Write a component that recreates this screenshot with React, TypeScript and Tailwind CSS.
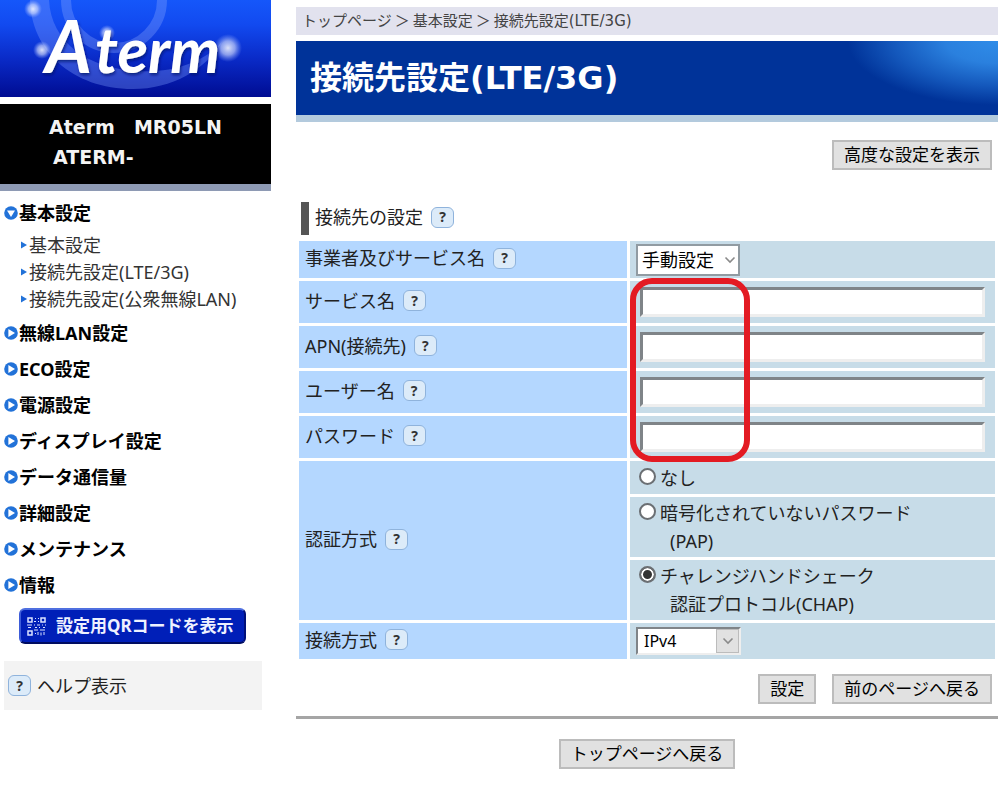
import { ReactNode, useState } from 'react';

const MENU = [
  '無線LAN設定',
  'ECO設定',
  '電源設定',
  'ディスプレイ設定',
  'データ通信量',
  '詳細設定',
  'メンテナンス',
  '情報',
];

const SUB_MENU = ['基本設定', '接続先設定(LTE/3G)', '接続先設定(公衆無線LAN)'];

const FIELDS = [
  { id: 'service', label: 'サービス名', type: 'text' },
  { id: 'apn', label: 'APN(接続先)', type: 'text' },
  { id: 'user', label: 'ユーザー名', type: 'text' },
  { id: 'password', label: 'パスワード', type: 'password' },
];

const AUTH = [
  { id: 'none', lines: ['なし'] },
  { id: 'pap', lines: ['暗号化されていないパスワード', '(PAP)'] },
  { id: 'chap', lines: ['チャレンジハンドシェーク', '認証プロトコル(CHAP)'] },
];

function Logo() {
  return (
    <svg viewBox="0 0 271 97" className="block w-full" role="img" aria-label="Aterm">
      <defs>
        <linearGradient id="sky" x1="0" y1="0" x2="0" y2="1">
          <stop offset="0" stopColor="#1557fa" />
          <stop offset="0.25" stopColor="#124af0" />
          <stop offset="0.6" stopColor="#0a2bc8" />
          <stop offset="1" stopColor="#000c92" />
        </linearGradient>
        <radialGradient id="orb">
          <stop offset="0" stopColor="#fff" stopOpacity="0.85" />
          <stop offset="0.5" stopColor="#dfe6ff" stopOpacity="0.6" />
          <stop offset="1" stopColor="#9db4ff" stopOpacity="0" />
        </radialGradient>
        <filter id="shade" x="-10%" y="-10%" width="120%" height="130%">
          <feDropShadow dx="1" dy="2" stdDeviation="1.5" floodColor="#000a60" floodOpacity="0.7" />
        </filter>
      </defs>
      <rect width="271" height="97" fill="url(#sky)" />
      <path
        d="M30 0C31 50 72 89 133 89C172 89 205 70 222 42C203 63 172 73 138 71C88 69 51 42 49 0Z"
        fill="#7f9dff"
        fillOpacity="0.35"
      />
      <circle cx="114" cy="0" r="48" fill="none" stroke="#8fabff" strokeOpacity="0.32" strokeWidth="10" />
      <circle cx="33" cy="9" r="9" fill="url(#orb)" />
      <circle cx="42" cy="50" r="9" fill="url(#orb)" />
      <circle cx="107" cy="33" r="8" fill="url(#orb)" />
      <circle cx="228" cy="48" r="14" fill="url(#orb)" />
      <g
        fill="#fff"
        fontFamily="Lato, 'Open Sans', sans-serif"
        fontStyle="italic"
        fontWeight="700"
        filter="url(#shade)"
      >
        <text x="45" y="73" fontSize="72">A</text>
        <text x="95" y="73" fontSize="63">term</text>
      </g>
    </svg>
  );
}

function MenuIcon({ open = false }: { open?: boolean }) {
  return (
    <svg viewBox="0 0 14 14" className="size-3.5 shrink-0" aria-hidden="true">
      <circle cx="7" cy="7" r="6.8" fill="#2272d8" />
      <path d={open ? 'M3 4.4h8L7 11Z' : 'M4.4 3v8L11 7Z'} fill="#fff" />
    </svg>
  );
}

function QrIcon() {
  return (
    <svg viewBox="0 0 19 19" className="size-[19px] shrink-0" fill="none" stroke="#dbe3ff" aria-hidden="true">
      <rect x="1" y="1" width="4" height="4" strokeWidth="1.5" />
      <rect x="14" y="1" width="4" height="4" strokeWidth="1.5" />
      <rect x="1" y="14" width="4" height="4" strokeWidth="1.5" />
      <path d="M8 1.5h1M11 1.5h1M7 4.5h2M11 4.5h1M8 16.5h1M11 15v3M14 15.5v3M17 15v3" strokeWidth="1" />
      <path d="M0 8h5M7 8h1M10 8h3M15 8h1M18 8h1M1 10.5h3M8 10.5h2M12 10.5h1M16 10.5h2M7 13h4M13 13h5" strokeWidth="1" />
    </svg>
  );
}

function HelpMark() {
  return (
    <span className="flex h-[21px] w-[23px] shrink-0 items-center justify-center rounded-md border border-[#8fb3dc] bg-[#dcebf9] font-['Noto_Sans',sans-serif] text-sm leading-none font-bold text-[#333]">
      ?
    </span>
  );
}

function HelpButton({ topic }: { topic: string }) {
  return (
    <button type="button" title={topic} className="cursor-pointer">
      <HelpMark />
    </button>
  );
}

function GrayButton({ children }: { children: ReactNode }) {
  return (
    <button
      type="button"
      className="h-[30px] cursor-pointer border-2 border-[#bcbcbc] bg-[#e1e1e1] px-2.5 text-[17px] leading-6 text-black hover:bg-[#e5f1fb]"
    >
      {children}
    </button>
  );
}

function Chevron({ className }: { className: string }) {
  return (
    <svg viewBox="0 0 12 8" className={className} fill="none" stroke="#8a8a8a" strokeWidth="1.6" aria-hidden="true">
      <path d="M1.5 1.5 6 6l4.5-4.5" />
    </svg>
  );
}

function LabelCell({ label, htmlFor, rowSpan }: { label: string; htmlFor?: string; rowSpan?: number }) {
  return (
    <th scope="row" rowSpan={rowSpan} className="bg-[#b4d7ff] pb-[3px] pl-1.5 text-left align-middle font-normal">
      <div className="flex items-center gap-2">
        {htmlFor ? <label htmlFor={htmlFor}>{label}</label> : <span>{label}</span>}
        <HelpButton topic={label} />
      </div>
    </th>
  );
}

function Sidebar() {
  return (
    <aside className="w-[271px] shrink-0">
      <Logo />
      <div className="mt-[7px] border-b-[7px] border-[#8e9ab4] bg-black pt-2 pb-3 font-['DejaVu_Sans','Noto_Sans_CJK_JP',sans-serif] text-[19px] leading-[30px] font-bold text-[#f4f4f4]">
        <p className="text-center">Aterm　MR05LN</p>
        <p className="pl-[53px]">ATERM-</p>
      </div>

      <nav className="pt-1 pl-1 text-lg">
        <a href="#basic" className="flex h-9 items-center gap-px font-bold">
          <MenuIcon open />
          基本設定
        </a>
        <ul className="pb-[3px] pl-[17px] text-[#333]">
          {SUB_MENU.map((item) => (
            <li key={item}>
              <a href="#sub" className="flex h-[27px] items-center gap-0.5 hover:underline">
                <svg viewBox="0 0 6 8" className="h-2 w-1.5" aria-hidden="true">
                  <path d="M0 0.5v7L6 4Z" fill="#2272d8" />
                </svg>
                {item}
              </a>
            </li>
          ))}
        </ul>
        {MENU.map((item) => (
          <a key={item} href="#menu" className="flex h-9 items-center gap-px font-bold">
            <MenuIcon />
            {item}
          </a>
        ))}
      </nav>

      <button
        type="button"
        className="mt-[5px] ml-[19px] flex h-9 w-[227px] cursor-pointer items-center gap-2.5 rounded-md border-2 border-t-[#4f6fe0] border-r-[#00107a] border-b-[#000c60] border-l-[#3d5cd8] bg-[#001fb8] pl-1.5 text-[17px] font-bold text-[#eef1ff]"
      >
        <QrIcon />
        設定用QRコードを表示
      </button>

      <a href="#help" className="mt-[17px] mr-[9px] ml-1 flex h-[49px] items-center gap-1.5 bg-[#f3f3f3] pl-1 text-lg text-[#222]">
        <HelpMark />
        ヘルプ表示
      </a>
    </aside>
  );
}

function SettingsTable() {
  const [auth, setAuth] = useState('chap');

  return (
    <table className="w-full table-fixed border-separate border-spacing-[3px] text-lg text-[#222]">
      <colgroup>
        <col className="w-[328px]" />
        <col />
      </colgroup>
      <tbody>
        <tr className="h-[37px]">
          <LabelCell label="事業者及びサービス名" htmlFor="carrier" />
          <td className="bg-[#c7dce8] pl-1.5">
            <div className="relative w-[104px]">
              <select
                id="carrier"
                className="block h-8 w-full appearance-none border-2 border-[#919ba2] bg-white pl-1 text-lg leading-7 text-black"
              >
                <option>手動設定</option>
              </select>
              <Chevron className="pointer-events-none absolute top-3 right-1 h-2 w-3" />
            </div>
          </td>
        </tr>

        {FIELDS.map((field, i) => (
          <tr key={field.id} className="h-[42px]">
            <LabelCell label={field.label} htmlFor={field.id} />
            <td className="relative bg-[#c7dce8] px-2.5">
              <input
                id={field.id}
                type={field.type}
                className="block h-[30px] w-full border-[3px] border-t-[#7f8488] border-r-[#eeeeee] border-b-[#eeeeee] border-l-[#7f8488] bg-white px-1"
              />
              {i === 0 && (
                <span className="pointer-events-none absolute -top-[3px] left-0 z-10 h-[184px] w-[120px] rounded-[22px] border-[6px] border-[#e31b23]" />
              )}
            </td>
          </tr>
        ))}

        {AUTH.map((option, i) => (
          <tr key={option.id} className={i === 0 ? 'h-[33px]' : 'h-[60px]'}>
            {i === 0 && <LabelCell label="認証方式" rowSpan={3} />}
            <td className="bg-[#c7dce8] pl-[9px] align-middle">
              <label className="flex items-start gap-1 leading-7">
                <input
                  type="radio"
                  name="auth"
                  value={option.id}
                  checked={auth === option.id}
                  onChange={() => setAuth(option.id)}
                  className="mt-1 size-[17px] shrink-0 appearance-none rounded-full border-2 border-[#6b6f73] bg-white checked:bg-[#333] checked:shadow-[inset_0_0_0_2px_#fff]"
                />
                <span>
                  {option.lines[0]}
                  {option.lines[1] && <span className="block pl-2.5">{option.lines[1]}</span>}
                </span>
              </label>
            </td>
          </tr>
        ))}

        <tr className="h-9">
          <LabelCell label="接続方式" htmlFor="ipmode" />
          <td className="bg-[#c7dce8] pl-1.5">
            <div className="relative w-[105px]">
              <select
                id="ipmode"
                className="block h-7 w-full appearance-none border-2 border-t-[#7f8488] border-r-[#eeeeee] border-b-[#eeeeee] border-l-[#7f8488] bg-white pl-1.5 text-base leading-6 text-black"
              >
                <option>IPv4</option>
              </select>
              <span className="pointer-events-none absolute top-0.5 right-0.5 flex h-6 w-[23px] items-center justify-center border border-[#bcbcbc] bg-[#e1e1e1]">
                <Chevron className="h-2 w-3" />
              </span>
            </div>
          </td>
        </tr>
      </tbody>
    </table>
  );
}

export default function App() {
  return (
    <div className="flex min-h-screen gap-[25px] bg-white pr-0.5 font-['Noto_Sans','Noto_Sans_CJK_JP',sans-serif] text-black">
      <Sidebar />

      <main className="min-w-0 flex-1 pt-[7px]">
        <nav className="flex h-7 items-center gap-[3px] bg-[#e2e2ee] pl-1.5 font-['DejaVu_Sans','Noto_Sans_CJK_JP',sans-serif] text-[15px] leading-7 text-[#444]">
          <a href="#top">トップページ</a>
          <span>＞</span>
          <a href="#basic">基本設定</a>
          <span>＞</span>
          <span>接続先設定(LTE/3G)</span>
        </nav>

        <h1 className="mt-1.5 flex h-[81px] items-center border-b-[7px] border-[#b3cadd] bg-[#003399] bg-[radial-gradient(ellipse_150px_64px_at_100%_0%,#2f8ce8_0%,#2a80de_35%,#1458bc_70%,#003399_100%)] pl-3.5 font-['DejaVu_Sans','Noto_Sans_CJK_JP',sans-serif] text-[32px] font-bold text-white">
          接続先設定(LTE/3G)
        </h1>

        <div className="mt-[18px] flex justify-end pr-1.5">
          <GrayButton>高度な設定を表示</GrayButton>
        </div>

        <div className="mt-8 ml-[5px] flex h-[33px] items-center gap-2 border-l-8 border-[#555] pb-[3px] pl-1.5 text-lg text-[#222]">
          <h2>接続先の設定</h2>
          <HelpButton topic="接続先の設定" />
        </div>

        <div className="mt-[3px]">
          <SettingsTable />
        </div>

        <div className="mt-3 flex justify-end gap-4 pr-1.5">
          <GrayButton>設定</GrayButton>
          <GrayButton>前のページへ戻る</GrayButton>
        </div>

        <hr className="mt-3 border-t-[3px] border-[#a5a5a5]" />

        <div className="mt-5 flex justify-center pb-9">
          <GrayButton>トップページへ戻る</GrayButton>
        </div>
      </main>
    </div>
  );
}
